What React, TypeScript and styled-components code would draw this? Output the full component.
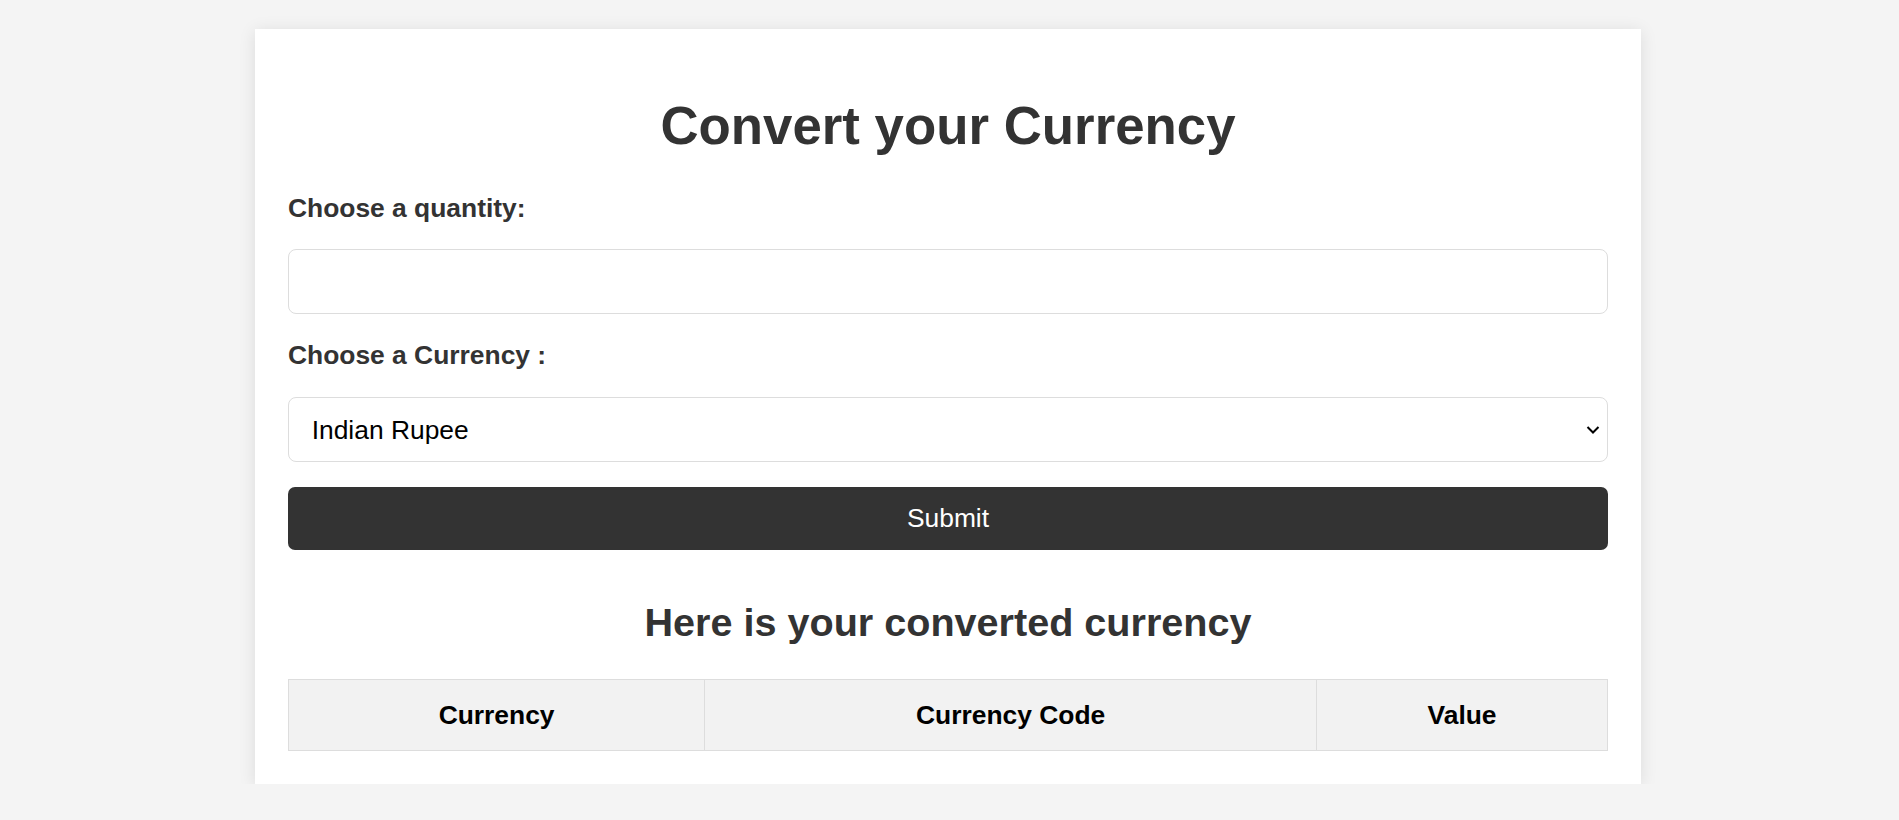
import React from "react";
import styled, { createGlobalStyle } from "styled-components";

const GlobalStyle = createGlobalStyle`
  html, body {
    margin: 0;
    padding: 0;
    background: #f4f4f4;
    font-family: "Liberation Sans", Arial, Helvetica, sans-serif;
  }
  body { padding-right: 3px; }
  * { box-sizing: border-box; }
`;

const Card = styled.main`
  max-width: 1386px;
  margin: 29px auto 0;
  padding: 33px 33px 33.4px;
  background: #ffffff;
  box-shadow: 0 2px 16px rgba(0, 0, 0, 0.1);
`;

const Title = styled.h1`
  margin: 33.2px 0 34.1px;
  font-size: 52.8px;
  font-weight: 700;
  line-height: normal;
  color: #333333;
  text-align: center;
`;

const Form = styled.form`
  display: flex;
  flex-direction: column;
`;

const Label = styled.label`
  display: block;
  padding-top: 2.4px;
  margin-bottom: 25.4px;
  font-size: 26.4px;
  font-weight: 700;
  line-height: normal;
  color: #333333;
`;

const TextInput = styled.input`
  display: block;
  width: 100%;
  height: 65px;
  margin: 0 0 24px;
  padding: 0 22.7px;
  border: 1px solid #dddddd;
  border-radius: 8px;
  background: #ffffff;
  font-family: inherit;
  font-size: 26.4px;
  color: #000000;
  outline: none;
`;

const SelectWrap = styled.div`
  position: relative;
  margin-bottom: 25px;
`;

const Select = styled.select`
  display: block;
  width: 100%;
  height: 65.5px;
  padding: 0 44px 0 22.7px;
  border: 1px solid #dddddd;
  border-radius: 8px;
  background: #ffffff;
  appearance: none;
  -webkit-appearance: none;
  font-family: inherit;
  font-size: 26.4px;
  color: #000000;
  outline: none;
`;

const Chevron = styled.svg`
  position: absolute;
  right: 8px;
  top: 50%;
  transform: translateY(-50%);
  pointer-events: none;
`;

const SubmitButton = styled.button`
  display: block;
  width: 100%;
  height: 63px;
  padding-top: 1px;
  border: none;
  border-radius: 7px;
  background: #333333;
  color: #ffffff;
  font-family: inherit;
  font-size: 26.4px;
  cursor: pointer;
`;

const SubTitle = styled.h2`
  margin: 50.1px 0 33.1px;
  font-size: 39.6px;
  font-weight: 700;
  line-height: normal;
  color: #333333;
  text-align: center;
`;

const Table = styled.table`
  width: 100%;
  border-collapse: collapse;
`;

const HeadCell = styled.th`
  padding: 20.5px 19.5px 18.5px;
  border: 1px solid #dddddd;
  background: #f2f2f2;
  font-size: 26.4px;
  font-weight: 700;
  line-height: normal;
  color: #000000;
  text-align: center;
`;

export default function App() {
  return (
    <>
      <GlobalStyle />
      <Card>
        <Title>Convert your Currency</Title>
        <Form onSubmit={(e) => e.preventDefault()}>
          <Label htmlFor="quantity">Choose a quantity:</Label>
          <TextInput id="quantity" type="number" />
          <Label htmlFor="currency">Choose a Currency :</Label>
          <SelectWrap>
            <Select id="currency" defaultValue="INR">
              <option value="INR">Indian Rupee</option>
              <option value="USD">US Dollar</option>
              <option value="EUR">Euro</option>
              <option value="GBP">British Pound</option>
            </Select>
            <Chevron width="14" height="9" viewBox="0 0 14 9" fill="none">
              <path d="M1.5 1.5 L7 7 L12.5 1.5" stroke="#000" strokeWidth="2" />
            </Chevron>
          </SelectWrap>
          <SubmitButton type="submit">Submit</SubmitButton>
        </Form>
        <SubTitle>Here is your converted currency</SubTitle>
        <Table>
          <thead>
            <tr>
              <HeadCell>Currency</HeadCell>
              <HeadCell>Currency Code</HeadCell>
              <HeadCell>Value</HeadCell>
            </tr>
          </thead>
        </Table>
      </Card>
    </>
  );
}
